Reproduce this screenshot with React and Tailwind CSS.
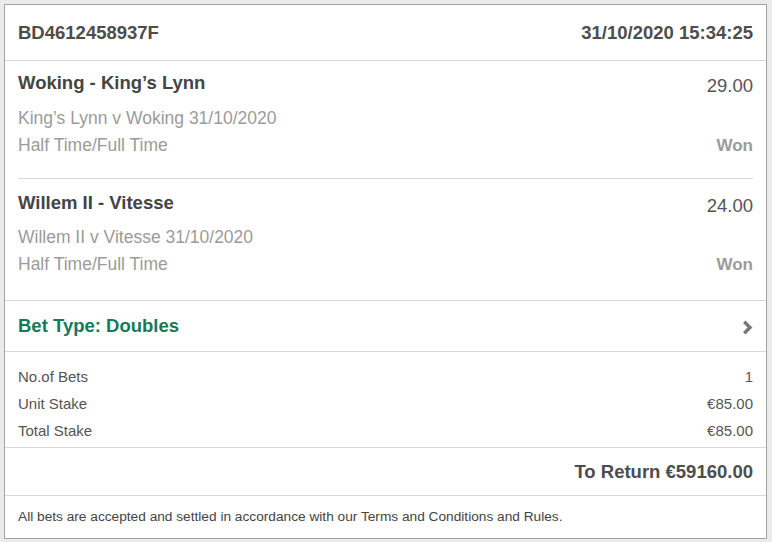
import React from "react";

const font = { fontFamily: '"Liberation Sans", Arial, sans-serif' };

function Match({ title, odds, event, market, result, top }) {
  return (
    <div className={top ? "pt-[9px] pb-[19px] border-b border-[#d9d9d9]" : "pt-[11px] pb-[22px]"}>
      <div className="flex justify-between items-start h-[26px]">
        <div className="text-[18.5px] leading-[26px] font-bold text-[#444444]">{title}</div>
        <div className="text-[18.5px] leading-[26px] relative top-[3px] text-[#555555]">{odds}</div>
      </div>
      <div className={top ? "mt-[9px]" : "mt-[8px]"}>
        <div className="text-[17.5px] leading-[27px] text-[#9b9b9b]">{event}</div>
        <div className="flex justify-between">
          <div className="text-[17.5px] leading-[27px] text-[#9b9b9b]">{market}</div>
          <div className="text-[17px] leading-[27px] font-bold text-[#9b9b9b]">{result}</div>
        </div>
      </div>
    </div>
  );
}

export default function App() {
  return (
    <div className="w-[772px] h-[542px] bg-[#ebebeb] pt-[4px] pl-[4px]" style={font}>
      <div className="w-[763px] h-[535px] bg-white border border-[#a3a3a3] flex flex-col">
        <div className="h-[56px] shrink-0 px-[13px] flex items-center justify-between border-b border-[#d9d9d9] text-[18.5px] font-bold text-[#4d4d4d]">
          <span>BD4612458937F</span>
          <span>31/10/2020 15:34:25</span>
        </div>
        <div className="px-[13px] border-b border-[#d9d9d9]">
          <Match
            top
            title="Woking - King’s Lynn"
            odds="29.00"
            event="King’s Lynn v Woking 31/10/2020"
            market="Half Time/Full Time"
            result="Won"
          />
          <Match
            title="Willem II - Vitesse"
            odds="24.00"
            event="Willem II v Vitesse 31/10/2020"
            market="Half Time/Full Time"
            result="Won"
          />
        </div>
        <div className="h-[51px] shrink-0 px-[13px] flex items-center justify-between border-b border-[#d9d9d9]">
          <span className="text-[18.5px] font-bold text-[#16795a]">Bet Type: Doubles</span>
          <svg width="11" height="15" viewBox="0 0 11 15" className="mt-[3px]">
            <path d="M2.2 1.8 L8 7.5 L2.2 13.2" fill="none" stroke="#777777" strokeWidth="3.4" />
          </svg>
        </div>
        <div className="pt-[11px] pb-[3px] px-[13px] border-b border-[#d9d9d9] text-[15px] leading-[27px] text-[#555555]">
          <div className="flex justify-between"><span>No.of Bets</span><span>1</span></div>
          <div className="flex justify-between"><span>Unit Stake</span><span>€85.00</span></div>
          <div className="flex justify-between"><span>Total Stake</span><span>€85.00</span></div>
        </div>
        <div className="h-[48px] shrink-0 px-[13px] flex items-center justify-end border-b border-[#d9d9d9] text-[18.5px] font-bold text-[#4d4d4d]">
          To Return €59160.00
        </div>
        <div className="flex-1 px-[13px] flex items-center text-[13.7px] text-[#444444]">
          All bets are accepted and settled in accordance with our Terms and Conditions and Rules.
        </div>
      </div>
    </div>
  );
}
